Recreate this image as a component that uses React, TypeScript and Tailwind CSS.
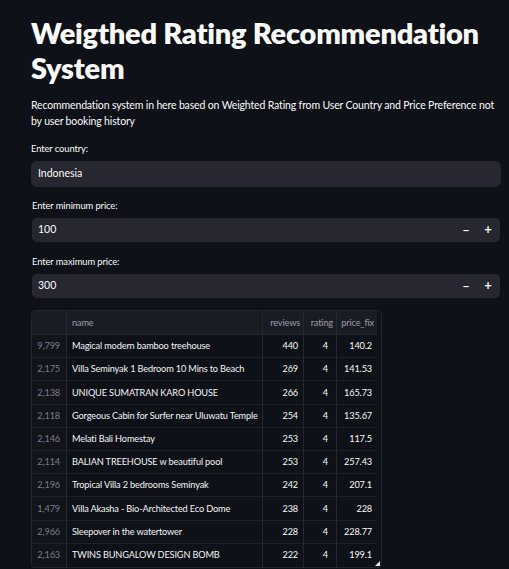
import React from "react";

const rows: [string, string, number, number, string][] = [
  ["9,799", "Magical modern bamboo treehouse", 440, 4, "140.2"],
  ["2,175", "Villa Seminyak 1 Bedroom 10 Mins to Beach", 269, 4, "141.53"],
  ["2,138", "UNIQUE SUMATRAN KARO HOUSE", 266, 4, "165.73"],
  ["2,118", "Gorgeous Cabin for Surfer near Uluwatu Temple", 254, 4, "135.67"],
  ["2,146", "Melati Bali Homestay", 253, 4, "117.5"],
  ["2,114", "BALIAN TREEHOUSE w beautiful pool", 253, 4, "257.43"],
  ["2,196", "Tropical Villa 2 bedrooms Seminyak", 242, 4, "207.1"],
  ["1,479", "Villa Akasha -  Bio-Architected Eco Dome", 238, 4, "228"],
  ["2,966", "Sleepover in the watertower", 228, 4, "228.77"],
  ["2,163", "TWINS BUNGALOW DESIGN BOMB", 222, 4, "199.1"],
];

function NumberInput({ value }: { value: string }) {
  return (
    <div className="ml-[1px] flex h-[24px] w-[468px] items-center rounded-[5px] bg-[#262730] pl-[6px] text-[10.5px] text-[#fafafa]">
      <span className="flex-1">{value}</span>
      <span className="flex w-[22px] items-center justify-center text-[12px] font-bold">−</span>
      <span className="mr-[1px] flex w-[22px] items-center justify-center text-[13px] font-bold">+</span>
    </div>
  );
}

export default function App() {
  const font = { fontFamily: '"Lato", "Noto Sans", sans-serif' };
  return (
    <div className="min-h-[569px] w-[509px] bg-[#0e1117] text-[#fafafa]" style={font}>
      <div className="pl-[31px] pt-[15px]">
        <h1 className="text-[29px] font-extrabold leading-[35px] tracking-[-0.25px]">
          Weigthed Rating Recommendation System
        </h1>
        <p className="mt-[12px] w-[474px] text-[10.5px] leading-[16px] tracking-[-0.15px]">
          Recommendation system in here based on Weighted Rating from User Country and Price Preference not by user booking history
        </p>

        <div className="mt-[13px] text-[9.4px] leading-[14px] tracking-[-0.1px]">Enter country:</div>
        <div className="mt-[5px] flex h-[26px] w-[470px] items-center rounded-[6px] bg-[#262730] pl-[7px] text-[10.5px]">
          Indonesia
        </div>

        <div className="mt-[12px] pl-[1px] text-[9.4px] leading-[14px] tracking-[-0.1px]">Enter minimum price:</div>
        <div className="mt-[5px]">
          <NumberInput value="100" />
        </div>

        <div className="mt-[13px] pl-[1px] text-[9.4px] leading-[14px] tracking-[-0.1px]">Enter maximum price:</div>
        <div className="mt-[5px]">
          <NumberInput value="300" />
        </div>

        <div className="relative mt-[12px] w-[351px] overflow-hidden rounded-[4px] border border-[#23252d] text-[9.2px] tracking-[-0.15px]">
          <div className="flex h-[24px] w-[345px] border-b border-[#262730] bg-[#1a1c24] text-[#9a9dab]">
            <div className="w-[35px] border-r border-[#262730]" />
            <div className="flex w-[196px] items-center border-r border-[#262730] pl-[5px]">name</div>
            <div className="flex w-[41px] items-center justify-end border-r border-[#262730] pr-[3px]">reviews</div>
            <div className="flex w-[33px] items-center justify-end border-r border-[#262730] pr-[3px]">rating</div>
            <div className="flex w-[40px] items-center justify-end pr-[3px]">price_fix</div>
          </div>
          {rows.map((r, i) => (
            <div
              key={i}
              className={`flex h-[23.2px] w-[345px] ${i < rows.length - 1 ? "border-b border-[#1f2129]" : ""}`}
            >
              <div className="flex w-[35px] items-center justify-end border-r border-[#262730] bg-[#12141b] pr-[6px] text-[#7a7e8c]">
                {r[0]}
              </div>
              <div className="flex w-[196px] items-center overflow-hidden whitespace-nowrap border-r border-[#262730] pl-[5px] text-[#f4f4f6]">
                {r[1]}
              </div>
              <div className="flex w-[41px] items-center justify-end border-r border-[#262730] pr-[5px]">{r[2]}</div>
              <div className="flex w-[33px] items-center justify-end border-r border-[#262730] pr-[8px]">{r[3]}</div>
              <div className="flex w-[40px] items-center justify-end pr-[5px]">{r[4]}</div>
            </div>
          ))}
          <svg className="absolute bottom-[1px] right-[1px]" width="5" height="5" viewBox="0 0 5 5">
            <polygon points="5,0 5,5 0,5" fill="#e8e8e8" />
          </svg>
        </div>
      </div>
    </div>
  );
}
